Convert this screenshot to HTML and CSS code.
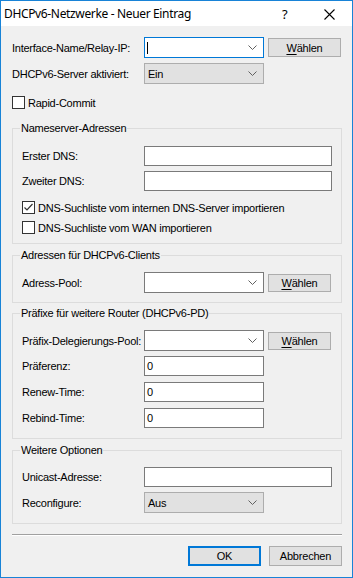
FILE: index.html
```html
<!DOCTYPE html>
<html lang="de">
<head>
<meta charset="utf-8">
<title>DHCPv6-Netzwerke - Neuer Eintrag</title>
<link rel="stylesheet" href="styles.css">
</head>
<body>
<div class="window">
  <div class="titlebar">
    <span class="title">DHCPv6-Netzwerke - Neuer Eintrag</span>
    <span class="help">?</span>
    <span class="close"><svg width="11" height="11" viewBox="0 0 11 11"><path d="M0.5 0.5 L10.5 10.5 M10.5 0.5 L0.5 10.5" stroke="#000" stroke-width="1.1" fill="none"/></svg></span>
  </div>
  <div class="content">
    <div class="row r-top1">
      <span class="lbl lbl-main">Interface-Name/Relay-IP:</span>
      <div class="combo edit focus"><span class="caret"></span><svg class="chev" width="9" height="5" viewBox="0 0 9 5"><path d="M0.5 0.5 L4.5 4.5 L8.5 0.5" stroke="#606060" fill="none"/></svg></div>
      <button class="btn btn-main"><u>W</u>ählen</button>
    </div>
    <div class="row r-top2">
      <span class="lbl lbl-main">DHCPv6-Server aktiviert:</span>
      <div class="combo list"><span class="val">Ein</span><svg class="chev" width="9" height="5" viewBox="0 0 9 5"><path d="M0.5 0.5 L4.5 4.5 L8.5 0.5" stroke="#606060" fill="none"/></svg></div>
    </div>
    <div class="check r-rapid"><span class="box"></span><span>Rapid-Commit</span></div>

    <div class="group g1">
      <span class="legend">Nameserver-Adressen</span>
      <div class="row r-first">
        <span class="lbl">Erster DNS:</span>
        <div class="text wide"></div>
      </div>
      <div class="row r-next">
        <span class="lbl">Zweiter DNS:</span>
        <div class="text wide"></div>
      </div>
      <div class="check c1"><span class="box"><svg width="11" height="11" viewBox="0 0 11 11"><path d="M1.5 5.5 L4 8 L9.5 2" stroke="#333" stroke-width="1.2" fill="none"/></svg></span><span>DNS-Suchliste vom internen DNS-Server importieren</span></div>
      <div class="check c2"><span class="box"></span><span>DNS-Suchliste vom WAN importieren</span></div>
    </div>

    <div class="group g2">
      <span class="legend">Adressen für DHCPv6-Clients</span>
      <div class="row r-first c-first">
        <span class="lbl">Adress-Pool:</span>
        <div class="combo edit"><svg class="chev" width="9" height="5" viewBox="0 0 9 5"><path d="M0.5 0.5 L4.5 4.5 L8.5 0.5" stroke="#606060" fill="none"/></svg></div>
        <button class="btn btn-grp"><u>W</u>ählen</button>
      </div>
    </div>

    <div class="group g3">
      <span class="legend">Präfixe für weitere Router (DHCPv6-PD)</span>
      <div class="row r-first c-first">
        <span class="lbl">Präfix-Delegierungs-Pool:</span>
        <div class="combo edit"><svg class="chev" width="9" height="5" viewBox="0 0 9 5"><path d="M0.5 0.5 L4.5 4.5 L8.5 0.5" stroke="#606060" fill="none"/></svg></div>
        <button class="btn btn-grp"><u>W</u>ählen</button>
      </div>
      <div class="row r-next">
        <span class="lbl">Präferenz:</span>
        <div class="text short"><span class="val0">0</span></div>
      </div>
      <div class="row r-next6">
        <span class="lbl">Renew-Time:</span>
        <div class="text short"><span class="val0">0</span></div>
      </div>
      <div class="row r-next6">
        <span class="lbl">Rebind-Time:</span>
        <div class="text short"><span class="val0">0</span></div>
      </div>
    </div>

    <div class="group g4">
      <span class="legend">Weitere Optionen</span>
      <div class="row r-first c-uni">
        <span class="lbl">Unicast-Adresse:</span>
        <div class="text wide"></div>
      </div>
      <div class="row r-next">
        <span class="lbl">Reconfigure:</span>
        <div class="combo list"><span class="val">Aus</span><svg class="chev" width="9" height="5" viewBox="0 0 9 5"><path d="M0.5 0.5 L4.5 4.5 L8.5 0.5" stroke="#606060" fill="none"/></svg></div>
      </div>
    </div>

    <div class="separator"></div>
    <div class="actions">
      <button class="btn btn-dlg default">OK</button>
      <button class="btn btn-dlg">Abbrechen</button>
    </div>
  </div>
</div>
</body>
</html>
```
FILE: styles.css
```css
* { box-sizing: border-box; }
html, body { margin: 0; padding: 0; background: #f0f0f0; }
body {
  font-family: "Liberation Sans", Arial, sans-serif;
  font-size: 11px;
  letter-spacing: -0.25px;
  color: #000;
}
.window {
  width: 353px;
  height: 578px;
  border: 1px solid #1883d7;
  background: #f0f0f0;
  overflow: hidden;
}
.titlebar {
  height: 25px;
  background: #fff;
  display: flex;
  align-items: center;
  position: relative;
  font-family: "Noto Sans", "Open Sans", sans-serif;
  font-size: 12px;
  letter-spacing: -0.35px;
}
.title { padding-left: 3px; }
.help { position: absolute; left: 281px; top: 4px; font-size: 13px; }
.close { position: absolute; left: 323px; top: 8px; width: 11px; height: 11px; display: block; }
.close svg { display: block; }

.content {
  padding: 0 10px 0 11px;
}
.row {
  display: flex;
  align-items: center;
}
.lbl { width: 122px; flex: none; white-space: nowrap; }
.lbl-main { width: 132px; }

.r-top1 { margin-top: 11px; height: 21px; }
.r-top2 { margin-top: 5px; height: 21px; }

.combo {
  width: 120px;
  height: 21px;
  flex: none;
  border: 1px solid #7a7a7a;
  background: #fff;
  display: flex;
  align-items: center;
  position: relative;
}
.combo.focus { border-color: #0078d7; }
.combo.list { background: #e1e1e1; border-color: #adadad; }
.combo .chev { position: absolute; right: 6px; top: 7px; }
.caret { display: block; width: 1px; height: 12px; background: #000; margin-left: 2px; }
.val { padding-left: 3px; }

.text {
  height: 20px;
  flex: none;
  border: 1px solid #7a7a7a;
  background: #fff;
  display: flex;
  align-items: center;
}
.text.wide { width: 188px; }
.text.short { width: 120px; }
.val0 { padding-left: 2px; }

.btn {
  font-family: "Liberation Sans", Arial, sans-serif;
  font-size: 11px;
  letter-spacing: -0.2px;
  color: #000;
  background: #e1e1e1;
  border: 1px solid #adadad;
  padding: 0;
  margin: 0 0 0 4px;
  flex: none;
}
.btn u { text-decoration-thickness: 1px; text-underline-offset: 2px; }
.btn-main { width: 73px; height: 19px; }
.btn-grp { width: 63px; height: 18px; }

.check { display: flex; align-items: center; height: 13px; }
.check .box {
  width: 13px;
  height: 13px;
  border: 1px solid #333;
  background: #fff;
  margin-right: 3px;
  flex: none;
  display: block;
}
.check .box svg { display: block; }
.r-rapid { margin-top: 12px; }

.group {
  border: 1px solid #dcdcdc;
  padding: 0 8px 10px 9px;
}
.legend {
  display: block;
  width: fit-content;
  height: 13px;
  line-height: 13px;
  margin: -7px 0 0 -2px;
  padding: 0 1px;
  background: #f0f0f0;
}
.g1 { margin-top: 19px; padding-bottom: 9px; }
.g2 { margin-top: 11px; padding-bottom: 9px; }
.g3 { margin-top: 10px; }
.g4 { margin-top: 11px; }

.r-first { margin-top: 11px; height: 20px; }
.c-first { margin-top: 10px; height: 21px; }
.c-uni { margin-top: 10px; }
.r-next { margin-top: 5px; height: 21px; }
.g1 .r-next { height: 20px; }
.g3 .r-next { height: 20px; }
.r-next6 { margin-top: 6px; height: 20px; }
.c1 { margin-top: 10px; }
.c2 { margin-top: 7px; }

.separator {
  margin-top: 10px;
  height: 2px;
  border-top: 1px solid #a0a0a0;
  border-bottom: 1px solid #fff;
}
.actions {
  margin-top: 10px;
  display: flex;
  justify-content: flex-end;
  gap: 8px;
}
.btn-dlg { width: 73px; height: 20px; margin: 0; }
.btn-dlg.default { border: 2px solid #0078d7; }
```
